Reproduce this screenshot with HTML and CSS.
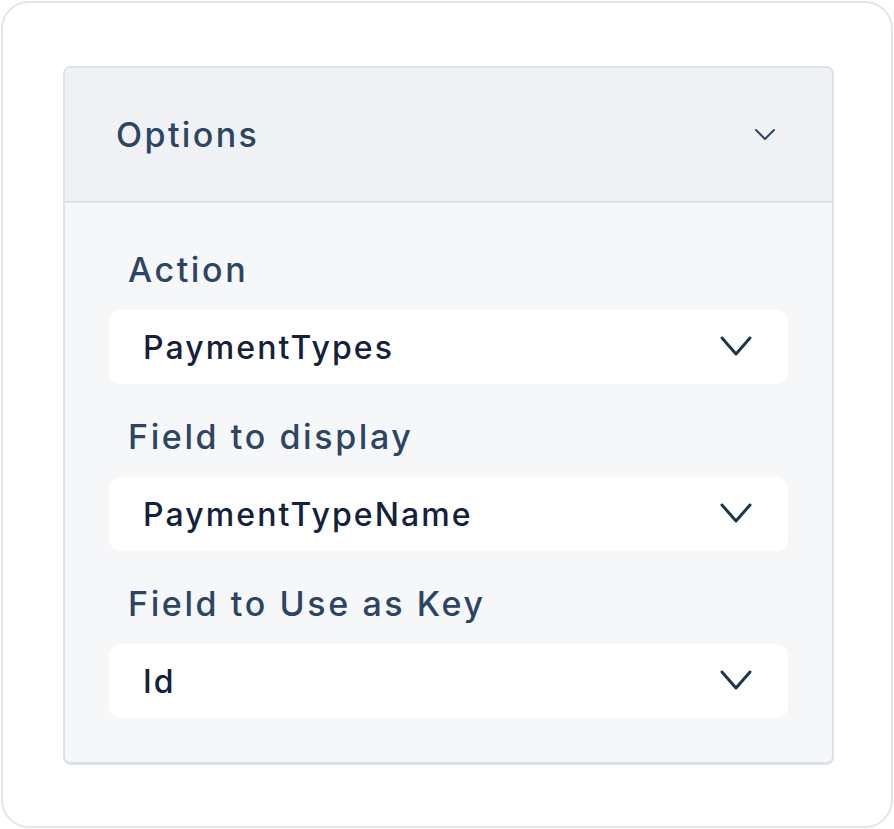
FILE: index.html
```html
<!DOCTYPE html>
<html>
<head>
<meta charset="utf-8">
<link rel="stylesheet" href="styles.css">
</head>
<body>
<div class="card">
  <div class="panel">
    <div class="panel-header">
      <span class="panel-title">Options</span>
      <svg class="chev-small" width="22" height="14" viewBox="0 0 22 14"><path d="M2 2 L11 11 L20 2" fill="none" stroke="#2b4563" stroke-width="2" stroke-linecap="round" stroke-linejoin="round"/></svg>
    </div>
    <div class="panel-body">
      <div class="field">
        <div class="label">Action</div>
        <div class="select"><span class="value">PaymentTypes</span>
          <svg class="chev" width="34" height="24" viewBox="0 0 34 24"><path d="M3 3 L17 19 L31 3" fill="none" stroke="#1e3452" stroke-width="3" stroke-linecap="round" stroke-linejoin="round"/></svg>
        </div>
      </div>
      <div class="field">
        <div class="label">Field to display</div>
        <div class="select"><span class="value">PaymentTypeName</span>
          <svg class="chev" width="34" height="24" viewBox="0 0 34 24"><path d="M3 3 L17 19 L31 3" fill="none" stroke="#1e3452" stroke-width="3" stroke-linecap="round" stroke-linejoin="round"/></svg>
        </div>
      </div>
      <div class="field">
        <div class="label">Field to Use as Key</div>
        <div class="select"><span class="value">Id</span>
          <svg class="chev" width="34" height="24" viewBox="0 0 34 24"><path d="M3 3 L17 19 L31 3" fill="none" stroke="#1e3452" stroke-width="3" stroke-linecap="round" stroke-linejoin="round"/></svg>
        </div>
      </div>
    </div>
  </div>
</div>
</body>
</html>
```
FILE: styles.css
```css
* { box-sizing: border-box; }
html, body { margin: 0; padding: 0; background: #ffffff; }
body {
  font-family: Inter, "Noto Sans", sans-serif;
  padding: 1px;
}
.card {
  width: 892px;
  height: 827px;
  border: 2px solid #e2e5ea;
  border-radius: 28px;
  background: #ffffff;
  padding: 63px 0 0 60px;
}
.panel {
  width: 771px;
  border: 2px solid #dde0e6;
  border-bottom-width: 3px;
  border-radius: 8px;
  overflow: hidden;
  background: #f5f7f9;
}
.panel-header {
  height: 135px;
  background: #eff1f4;
  border-bottom: 2px solid #dde0e6;
  display: flex;
  align-items: center;
  justify-content: space-between;
  padding: 0 56px 0 51px;
}
.panel-title {
  font-size: 34px;
  font-weight: 500;
  color: #2b4563;
  letter-spacing: 2.4px;
}
.chev-small { display: block; }
.panel-body {
  padding: 46px 44px 44px 44px;
  display: flex;
  flex-direction: column;
  gap: 32px;
}
.label {
  font-size: 34px;
  font-weight: 500;
  color: #2b4563;
  letter-spacing: 2.6px;
  line-height: 42px;
  padding-left: 19px;
  margin-bottom: 19px;
}
.select {
  height: 74px;
  background: #ffffff;
  border-radius: 12px;
  display: flex;
  align-items: center;
  justify-content: space-between;
  padding: 0 35px 0 34px;
}
.value {
  font-size: 32px;
  font-weight: 500;
  color: #14213a;
  letter-spacing: 2.1px;
}
.chev { display: block; }
```
